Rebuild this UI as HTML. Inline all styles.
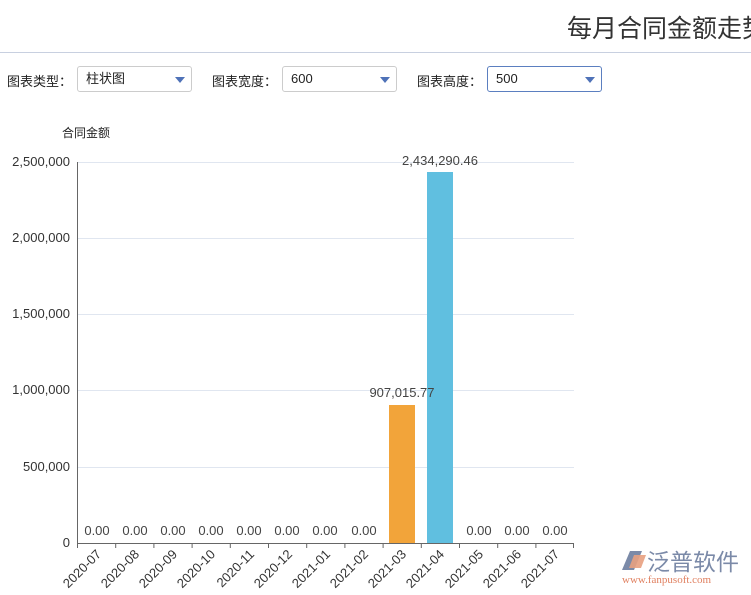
<!DOCTYPE html>
<html><head><meta charset="utf-8"><style>
html,body{margin:0;padding:0;width:751px;height:595px;overflow:hidden;background:#fff;font-family:"Liberation Sans","Noto Sans CJK SC",sans-serif;}
.title{position:absolute;left:567px;top:9px;font-size:25px;color:#333;white-space:nowrap;}
.hr{position:absolute;left:0;top:52px;width:751px;height:1px;background:#c8d0e0;}
.lbl{position:absolute;top:71px;font-size:13px;color:#222;}
.sel{position:absolute;top:66px;width:113px;height:26px;border:1px solid #ccc;border-radius:3px;box-sizing:border-box;font-size:13px;color:#222;padding:4px 0 0 8px;line-height:16px;}
.sel:after{content:"";position:absolute;right:6px;top:10px;border-left:5px solid transparent;border-right:5px solid transparent;border-top:6px solid #4f72b8;}
</style></head><body>
<div class="title">每月合同金额走势</div>
<div class="hr"></div>
<div class="lbl" style="left:7px">图表类型：</div>
<div class="sel" style="left:77px;width:115px">柱状图</div>
<div class="lbl" style="left:212px">图表宽度：</div>
<div class="sel" style="left:282px;width:115px">600</div>
<div class="lbl" style="left:417px">图表高度：</div>
<div class="sel" style="left:487px;width:115px;border-color:#5b7fc0">500</div>
<svg width="751" height="595" style="position:absolute;left:0;top:0" font-family="Liberation Sans, Noto Sans CJK SC, sans-serif">
<text x="62" y="137" font-size="12" fill="#222">合同金额</text>
<g stroke="#e0e6f0" stroke-width="1">
<line x1="77" y1="162.5" x2="574" y2="162.5"/>
<line x1="77" y1="238.5" x2="574" y2="238.5"/>
<line x1="77" y1="314.5" x2="574" y2="314.5"/>
<line x1="77" y1="390.5" x2="574" y2="390.5"/>
<line x1="77" y1="467.5" x2="574" y2="467.5"/>
</g>
<g font-size="13" fill="#333" text-anchor="end">
<text x="70" y="166">2,500,000</text>
<text x="70" y="242">2,000,000</text>
<text x="70" y="318">1,500,000</text>
<text x="70" y="394">1,000,000</text>
<text x="70" y="471">500,000</text>
<text x="70" y="547">0</text>
</g>
<rect x="389" y="405" width="26" height="138" fill="#f2a43a"/>
<rect x="427" y="172" width="26" height="371" fill="#60bfe0"/>
<line x1="77.5" y1="162" x2="77.5" y2="543" stroke="#666"/>
<line x1="77" y1="543.5" x2="574" y2="543.5" stroke="#666"/>
<g stroke="#666">
<line x1="77.5" y1="543" x2="77.5" y2="548"/><line x1="115.7" y1="543" x2="115.7" y2="548"/><line x1="153.9" y1="543" x2="153.9" y2="548"/><line x1="192.1" y1="543" x2="192.1" y2="548"/><line x1="230.3" y1="543" x2="230.3" y2="548"/><line x1="268.5" y1="543" x2="268.5" y2="548"/><line x1="306.7" y1="543" x2="306.7" y2="548"/><line x1="344.9" y1="543" x2="344.9" y2="548"/><line x1="383.1" y1="543" x2="383.1" y2="548"/><line x1="421.3" y1="543" x2="421.3" y2="548"/><line x1="459.5" y1="543" x2="459.5" y2="548"/><line x1="497.7" y1="543" x2="497.7" y2="548"/><line x1="535.9" y1="543" x2="535.9" y2="548"/><line x1="573.5" y1="543" x2="573.5" y2="548"/>
</g>
<g font-size="13" fill="#444" text-anchor="middle">
<text x="97" y="535">0.00</text><text x="135" y="535">0.00</text><text x="173" y="535">0.00</text><text x="211" y="535">0.00</text><text x="249" y="535">0.00</text><text x="287" y="535">0.00</text><text x="325" y="535">0.00</text><text x="364" y="535">0.00</text>
<text x="479" y="535">0.00</text><text x="517" y="535">0.00</text><text x="555" y="535">0.00</text>
<text x="402" y="397">907,015.77</text>
<text x="440" y="165">2,434,290.46</text>
</g>
<g font-size="13" fill="#333" text-anchor="end">
<text transform="translate(102,555) rotate(-45)">2020-07</text>
<text transform="translate(140,555) rotate(-45)">2020-08</text>
<text transform="translate(178,555) rotate(-45)">2020-09</text>
<text transform="translate(216,555) rotate(-45)">2020-10</text>
<text transform="translate(255,555) rotate(-45)">2020-11</text>
<text transform="translate(293,555) rotate(-45)">2020-12</text>
<text transform="translate(331,555) rotate(-45)">2021-01</text>
<text transform="translate(369,555) rotate(-45)">2021-02</text>
<text transform="translate(407,555) rotate(-45)">2021-03</text>
<text transform="translate(445,555) rotate(-45)">2021-04</text>
<text transform="translate(484,555) rotate(-45)">2021-05</text>
<text transform="translate(522,555) rotate(-45)">2021-06</text>
<text transform="translate(560,555) rotate(-45)">2021-07</text>
</g>
<path d="M630 551 L642 551 L634 570 L622 570 Z" fill="#7b8aa8"/>
<path d="M634 555 L646 555 L641 568 L629 568 Z" fill="#e8a080" opacity="0.9"/>
<text x="647" y="570" font-size="23" fill="#7b8aa8">泛普软件</text>
<text x="622" y="583" font-size="11" fill="#e08060" font-family="Liberation Serif, serif">www.fanpusoft.com</text>
</svg>
</body></html>
